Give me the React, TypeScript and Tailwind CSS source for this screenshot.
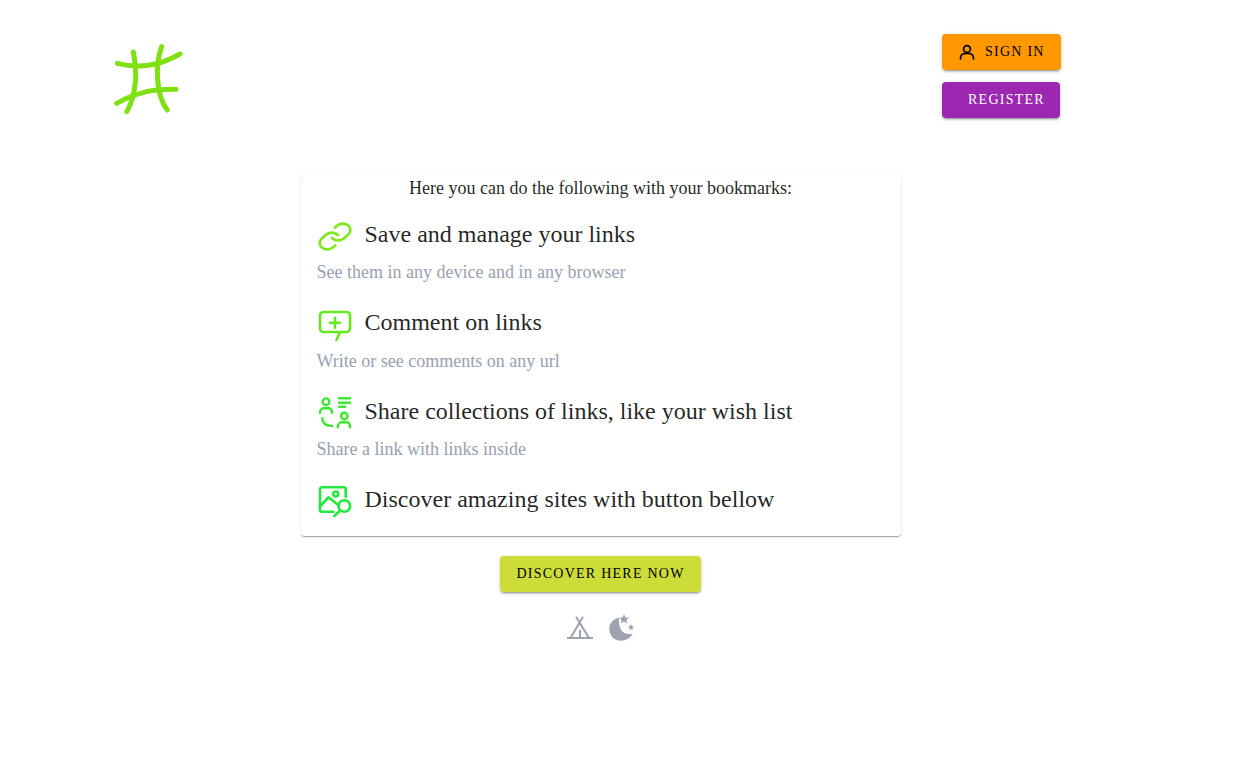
const features = [
  { title: "Save and manage your links", sub: "See them in any device and in any browser", icon: LinkIcon },
  { title: "Comment on links", sub: "Write or see comments on any url", icon: CommentIcon },
  { title: "Share collections of links, like your wish list", sub: "Share a link with links inside", icon: ShareIcon },
  { title: "Discover amazing sites with button bellow", sub: "", icon: DiscoverIcon },
];

function Logo() {
  return (
    <svg className="h-[72px] w-[72px]" viewBox="36 36 216 216" fill="none" stroke="#7fe014" strokeWidth="15" strokeLinecap="round">
      <path d="M100 66C106 95 110 130 105 165C101 200 92 225 80 245" />
      <path d="M185 50C174 80 170 115 173 150C176 190 186 220 202 240" />
      <path d="M52 100C85 108 120 110 150 105C185 100 215 86 240 72" />
      <path d="M50 220C80 203 110 192 140 185C170 179 200 178 228 178" />
    </svg>
  );
}

function UserIcon() {
  return (
    <svg className="h-5 w-5" viewBox="0 0 20 20" fill="none" stroke="currentColor" strokeWidth="1.7" strokeLinecap="round">
      <circle cx="10" cy="7" r="3.4" />
      <path d="M3.500 17v-.5c0-3 2-5 5-5h3c3 0 5 2 5 5v.5" />
    </svg>
  );
}

function LinkIcon() {
  return (
    <svg className="mt-1 h-9 w-9 shrink-0" viewBox="0 0 36 36" fill="none" stroke="#7ee81a" strokeLinecap="round" strokeLinejoin="round">
      <g transform="translate(-0.600 2.900) scale(1.55 1.3)">
        <path vectorEffect="non-scaling-stroke" strokeWidth="2.600" d="M10 13a5 5 0 0 0 7.540.54l3-3a5 5 0 0 0-7.070-7.070l-1.720 1.710" />
        <path vectorEffect="non-scaling-stroke" strokeWidth="2.600" d="M14 11a5 5 0 0 0-7.540-.54l-3 3a5 5 0 0 0 7.070 7.070l1.710-1.710" />
      </g>
    </svg>
  );
}

function CommentIcon() {
  return (
    <svg className="mt-1 h-9 w-9 shrink-0" viewBox="0 0 36 36" fill="none" stroke="#66e81f" strokeWidth="2.600" strokeLinecap="round" strokeLinejoin="round">
      <rect x="3" y="6" width="30" height="20" rx="3.500" />
      <path d="M23 26 19.500 34" />
      <path d="M18 11.700v10M13 16.700h10" />
    </svg>
  );
}

function ShareIcon() {
  return (
    <svg className="mt-1 h-9 w-9 shrink-0" viewBox="0 0 36 36" fill="none" stroke="#3de82e" strokeWidth="2.400" strokeLinecap="round" strokeLinejoin="round">
      <circle cx="9" cy="6.700" r="3.300" />
      <path d="M3 17.700c0-3 2-4.400 4-4.400h4c2 0 4 1.400 4 4.400" />
      <path d="M22 3.300H33M22 7.700H33M22 11.700H28" />
      <circle cx="27.300" cy="21" r="3.300" />
      <path d="M20.700 32.300c0-3 2-5 4-5h5c2 0 3.300 2 3.300 5" />
      <path d="M5.300 23.300c0 3.700 2 7.700 10 7.700" />
    </svg>
  );
}

function DiscoverIcon() {
  return (
    <svg className="mt-1 h-9 w-9 shrink-0" viewBox="0 0 36 36" fill="none" stroke="#22e83f" strokeWidth="2.600" strokeLinecap="round" strokeLinejoin="round">
      <path d="M16.300 28.700H5a2 2 0 0 1-2-2V6.300a2 2 0 0 1 2-2h21.700a2 2 0 0 1 2 2v7.400" />
      <path d="M3 23.700 11.300 14.300l10 7.700" />
      <circle cx="18.700" cy="11" r="2.500" />
      <circle cx="27.300" cy="23" r="5.800" />
      <path d="M23 27.700 17.300 33" />
    </svg>
  );
}

function TentIcon() {
  return (
    <svg className="h-7 w-7" viewBox="0 0 28 28" fill="none" stroke="#9ca3af" strokeWidth="2">
      <path d="M1 23h26" />
      <path d="M10 1.700 23 23M17 1.700 4.500 23" />
      <path d="M14 15v8" />
    </svg>
  );
}

function MoonIcon() {
  return (
    <svg className="h-7 w-7 overflow-visible" viewBox="0 0 28 28" fill="#9ca3af">
      <path d="M11 2.700C5.200 4 1.300 8 1.300 13.800 1.300 20.500 6 25.700 12.800 25.700c5.200 0 9.700-2.900 12-7-5.300 1.400-10.300-.6-12.300-5.200-1.500-3.500-1.900-7.400-1.500-10.800Z" />
      <polygon points="16,-1 17.500,2.500 21,2.800 18.300,5 19.200,8.500 16,6.600 12.800,8.500 13.700,5 11,2.800 14.500,2.500" />
      <polygon points="23,9 23.900,11.200 26.200,11.400 24.400,12.900 25,15.200 23,14 21,15.200 21.600,12.900 19.800,11.400 22.100,11.200" />
    </svg>
  );
}

export default function App() {
  return (
    <div className="min-h-[760px] w-[1201px] bg-white font-['Liberation_Serif',serif] text-black/[0.87]">
      <header className="ml-[112px] flex w-[949px] items-start justify-between pt-[34px]">
        <div className="mt-2">
          <Logo />
        </div>
        <div className="flex flex-col items-start gap-3">
          <button className="flex h-9 w-[119px] items-center rounded bg-[#ff9800] pl-[15px] text-sm tracking-[1.25px] text-black shadow-[0_3px_1px_-2px_rgba(0,0,0,0.2),0_2px_2px_0_rgba(0,0,0,0.14),0_1px_5px_0_rgba(0,0,0,0.12)]">
            <UserIcon />
            <span className="ml-[8px]">SIGN IN</span>
          </button>
          <button className="h-9 w-[118px] rounded bg-[#9c27b0] pl-[26px] text-left text-sm tracking-[1.25px] text-white shadow-[0_3px_1px_-2px_rgba(0,0,0,0.2),0_2px_2px_0_rgba(0,0,0,0.14),0_1px_5px_0_rgba(0,0,0,0.12)]">
            REGISTER
          </button>
        </div>
      </header>

      <main className="mt-14 flex flex-col items-center">
        <section className="h-[362px] w-[600px] rounded bg-white px-4 shadow-[0_2px_1px_-1px_rgba(0,0,0,0.2),0_1px_1px_0_rgba(0,0,0,0.14),0_1px_3px_0_rgba(0,0,0,0.12)]">
          <p className="text-center text-lg leading-7">Here you can do the following with your bookmarks:</p>
          <div className="mt-3 flex flex-col">
            {features.map((f) => (
              <div key={f.title} className="h-[88.33px]">
                <div className="flex h-10 items-center gap-3">
                  <f.icon />
                  <h3 className="text-2xl">{f.title}</h3>
                </div>
                {f.sub && <p className="mt-[4.3px] text-lg leading-7 text-gray-400">{f.sub}</p>}
              </div>
            ))}
          </div>
        </section>

        <button className="mt-5 h-9 rounded bg-[#cddc39] px-4 text-sm tracking-[1.25px] text-black shadow-[0_3px_1px_-2px_rgba(0,0,0,0.2),0_2px_2px_0_rgba(0,0,0,0.14),0_1px_5px_0_rgba(0,0,0,0.12)]">
          DISCOVER HERE NOW
        </button>

        <div className="mt-[23px] flex items-center gap-[14px]">
          <TentIcon />
          <MoonIcon />
        </div>
      </main>
    </div>
  );
}
